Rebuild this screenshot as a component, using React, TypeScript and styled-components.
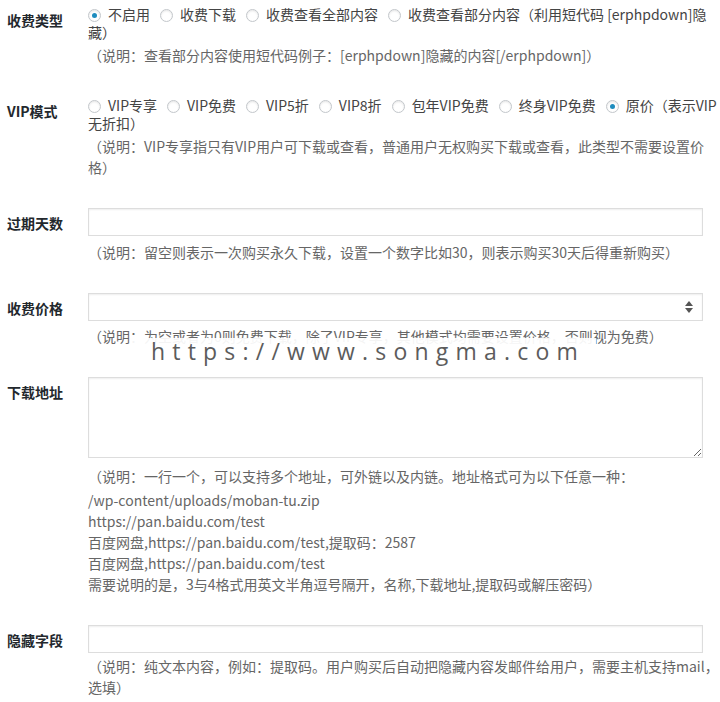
import React from "react";
import styled, { createGlobalStyle, css } from "styled-components";

const Global = createGlobalStyle`
  html, body { margin: 0; padding: 0; background: #fff; }
  body {
    font-family: "Noto Sans CJK SC", "Noto Sans", sans-serif;
    font-size: 14px;
    color: #444;
  }
`;

const Page = styled.div`
  position: relative;
  width: 720px;
  padding-top: 5px;
  display: grid;
  row-gap: 30px;
`;

const Row = styled.div`
  display: grid;
  grid-template-columns: 88px 632px;
  align-items: start;
`;

const Label = styled.div`
  padding: 5px 0 0 7px;
  font-weight: 700;
  font-size: 14px;
  line-height: 20px;
  color: #23282d;
`;

const Field = styled.div`
  min-width: 0;
`;

const RadioGroup = styled.div`
  line-height: 18px;
  color: #444;
`;

const Option = styled.label`
  margin-right: 10px;
`;

const Radio = styled.span<{ $checked?: boolean }>`
  display: inline-block;
  position: relative;
  box-sizing: border-box;
  width: 13px;
  height: 13px;
  margin-right: 7px;
  vertical-align: -2px;
  border: 1px solid #c3c7cb;
  border-radius: 50%;
  background: #fff;
  box-shadow: inset 0 1px 2px rgba(0, 0, 0, 0.1);
  ${(p) =>
    p.$checked &&
    css`
      &::after {
        content: "";
        position: absolute;
        left: 3px;
        top: 3px;
        width: 5px;
        height: 5px;
        border-radius: 50%;
        background: #1e8cbe;
      }
    `}
`;

const Desc = styled.div<{ $mt: number }>`
  margin-top: ${(p) => p.$mt}px;
  color: #666;
  line-height: 21px;
  font-size: 14px;
`;

const DescBody = styled.div`
  margin-top: 3px;
`;

const TextInput = styled.input`
  display: block;
  box-sizing: border-box;
  width: 615px;
  height: 28px;
  margin: 0;
  padding: 3px 6px;
  border: 1px solid #ddd;
  border-radius: 0;
  background: #fff;
  box-shadow: inset 0 1px 2px rgba(0, 0, 0, 0.07);
  font: inherit;
  outline: none;
`;

const SelectBox = styled.div`
  position: relative;
  box-sizing: border-box;
  width: 615px;
  height: 28px;
  border: 1px solid #ddd;
  background: #fff;
  box-shadow: inset 0 1px 2px rgba(0, 0, 0, 0.07);
`;

const Arrows = styled.svg`
  position: absolute;
  right: 9px;
  top: 7px;
`;

const TextArea = styled.textarea`
  display: block;
  box-sizing: border-box;
  width: 615px;
  height: 81px;
  margin: 0;
  padding: 3px 6px;
  border: 1px solid #ddd;
  border-radius: 0;
  background: #fff;
  box-shadow: inset 0 1px 2px rgba(0, 0, 0, 0.07);
  font: inherit;
  outline: none;
  resize: both;
`;

const Watermark = styled.div`
  position: absolute;
  left: 130px;
  top: 338px;
  width: 466px;
  height: 27px;
  background: rgba(255, 255, 255, 0.93);
  font-family: "Open Sans", "Noto Sans", sans-serif;
  font-size: 23px;
  line-height: 27px;
  letter-spacing: 7.2px;
  color: #5c5c5c;
  text-align: center;
  white-space: nowrap;
  padding-left: 10px;
  box-sizing: border-box;
`;

const feeOptions = ["不启用", "收费下载", "收费查看全部内容", "收费查看部分内容（利用短代码 [erphpdown]隐藏）"];
const vipOptions = ["VIP专享", "VIP免费", "VIP5折", "VIP8折", "包年VIP免费", "终身VIP免费", "原价（表示VIP无折扣）"];

function Radios({ options, checked }: { options: string[]; checked: number }) {
  return (
    <RadioGroup>
      {options.map((o, i) => (
        <Option key={o}>
          <Radio $checked={i === checked} />
          {o}
        </Option>
      ))}
    </RadioGroup>
  );
}

export default function App() {
  return (
    <>
      <Global />
      <Page>
        <Row>
          <Label>收费类型</Label>
          <Field>
            <Radios options={feeOptions} checked={0} />
            <Desc $mt={4}>（说明：查看部分内容使用短代码例子：[erphpdown]隐藏的内容[/erphpdown]）</Desc>
          </Field>
        </Row>
        <Row>
          <Label>VIP模式</Label>
          <Field>
            <Radios options={vipOptions} checked={6} />
            <Desc $mt={4}>（说明：VIP专享指只有VIP用户可下载或查看，普通用户无权购买下载或查看，此类型不需要设置价格）</Desc>
          </Field>
        </Row>
        <Row>
          <Label>过期天数</Label>
          <Field>
            <TextInput type="text" />
            <Desc $mt={6}>（说明：留空则表示一次购买永久下载，设置一个数字比如30，则表示购买30天后得重新购买）</Desc>
          </Field>
        </Row>
        <Row>
          <Label>收费价格</Label>
          <Field>
            <SelectBox>
              <Arrows width="8" height="12" viewBox="0 0 8 12">
                <path d="M4 0 L8 5 L0 5 Z" fill="#555" />
                <path d="M4 12 L8 7 L0 7 Z" fill="#555" />
              </Arrows>
            </SelectBox>
            <Desc $mt={5}>（说明：为空或者为0则免费下载，除了VIP专享，其他模式均需要设置价格，否则视为免费）</Desc>
          </Field>
        </Row>
        <Row>
          <Label>下载地址</Label>
          <Field>
            <TextArea />
            <Desc $mt={8}>
              <div>（说明：一行一个，可以支持多个地址，可外链以及内链。地址格式可为以下任意一种：</div>
              <DescBody>
                /wp-content/uploads/moban-tu.zip
                <br />
                https://pan.baidu.com/test
                <br />
                百度网盘,https://pan.baidu.com/test,提取码：2587
                <br />
                百度网盘,https://pan.baidu.com/test
                <br />
                需要说明的是，3与4格式用英文半角逗号隔开，名称,下载地址,提取码或解压密码）
              </DescBody>
            </Desc>
          </Field>
        </Row>
        <Row>
          <Label>隐藏字段</Label>
          <Field>
            <TextInput type="text" />
            <Desc $mt={3}>（说明：纯文本内容，例如：提取码。用户购买后自动把隐藏内容发邮件给用户，需要主机支持mail，选填）</Desc>
          </Field>
        </Row>
        <Watermark>https://www.songma.com</Watermark>
      </Page>
    </>
  );
}
